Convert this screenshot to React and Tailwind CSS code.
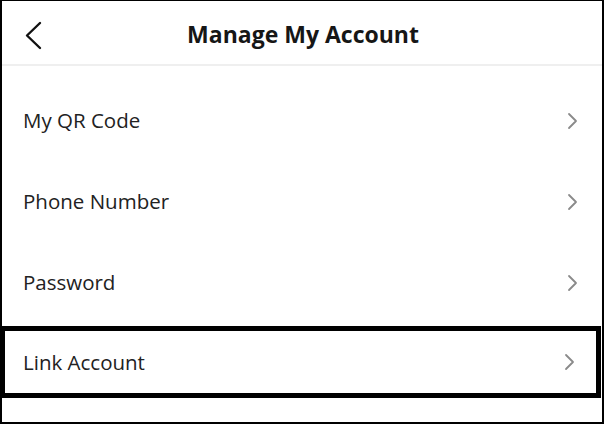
import React from "react";

const font = { fontFamily: '"Open Sans", "Liberation Sans", sans-serif' };

function Chevron() {
  return (
    <svg width="12" height="18" viewBox="0 0 12 18" className="shrink-0">
      <polyline points="2,2 9,9 2,16" fill="none" stroke="#8a8a8a" strokeWidth="1.8" strokeLinecap="round" strokeLinejoin="round" />
    </svg>
  );
}

function Row({ label }) {
  return (
    <div className="h-[81px] flex items-center justify-between pl-[21px] pr-[23px]">
      <span className="text-[20.5px] text-[#222]">{label}</span>
      <Chevron />
    </div>
  );
}

export default function App() {
  return (
    <div className="w-[604px] h-[424px] bg-white border-t border-l-2 border-r-2 border-b-2 border-black flex flex-col overflow-hidden" style={font}>
      <div className="h-[65px] shrink-0 flex items-center relative border-b-2 border-[#efefef]">
        <svg width="20" height="30" viewBox="0 0 20 30" className="absolute left-[21px] top-[20px]">
          <polyline points="17,2 4,14.5 17,27" fill="none" stroke="#111" strokeWidth="2.4" strokeLinecap="round" strokeLinejoin="round" />
        </svg>
        <div className="flex-1 text-center text-[23px] font-bold text-[#161616] pt-[3px] pl-[2px]">Manage My Account</div>
      </div>
      <div className="pt-[14px] flex flex-col">
        <Row label="My QR Code" />
        <Row label="Phone Number" />
        <Row label="Password" />
        <div className="h-[81px] pt-[3px]">
          <div className="h-[72px] -ml-[2px] mr-[1px] border-[5px] border-black flex items-center justify-between pl-[18px] pr-[20px]">
            <span className="text-[20.5px] text-[#222]">Link Account</span>
            <Chevron />
          </div>
        </div>
      </div>
    </div>
  );
}
